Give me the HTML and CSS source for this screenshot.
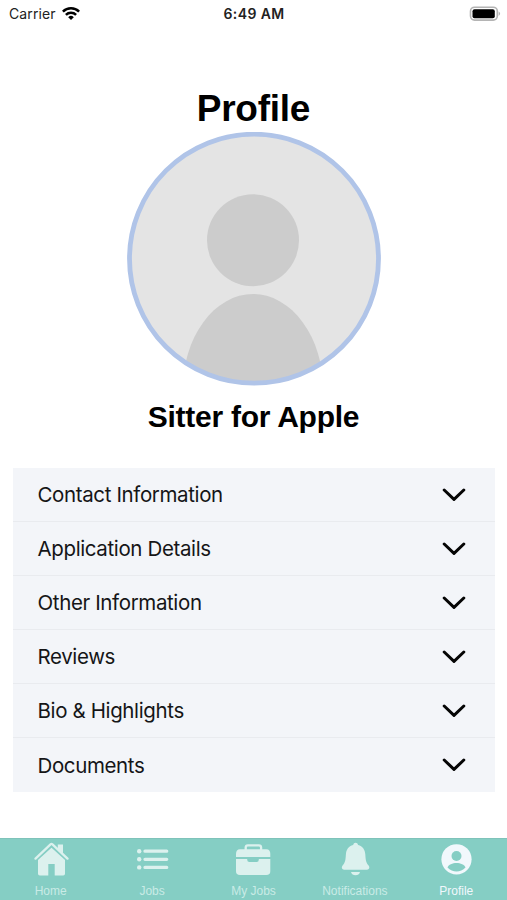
FILE: index.html
```html
<!DOCTYPE html>
<html lang="en">
<head>
<meta charset="utf-8">
<title>Profile</title>
<link rel="stylesheet" href="styles.css">
</head>
<body>
<div class="screen">
  <header class="status">
    <div class="carrier">Carrier
      <svg width="18" height="14" viewBox="0 0 18 14"><g fill="none" stroke="#000" stroke-width="2.5"><path d="M.9 4.700a11.500 11.500 0 0 1 16.200 0"/><path d="M3.900 7.800a7.200 7.200 0 0 1 10.200 0"/></g><path d="M6.200 10.200a4 4 0 0 1 5.600 0L9 13z"/></svg>
    </div>
    <div class="time">6:49 AM</div>
    <svg class="battery" width="32" height="16" viewBox="0 0 32 16"><rect x="1.500" y="1.200" width="26.800" height="12.900" rx="4" fill="#fff" stroke="#b4b4b4" stroke-width="1.600"/><rect x="3.500" y="3.300" width="22.300" height="8.900" rx="2"/><path d="M29.600 5.500q3 2.200 0 4.400z" fill="#b4b4b4"/></svg>
  </header>
  <main>
    <h1>Profile</h1>
    <svg class="avatar" width="254" height="254" viewBox="0 0 254 254">
      <clipPath id="disc"><circle cx="127" cy="127" r="124"/></clipPath>
      <circle cx="127" cy="127" r="124" fill="#e4e4e4"/>
      <g clip-path="url(#disc)" fill="#cccccc"><circle cx="126" cy="108.200" r="46"/><ellipse cx="126" cy="259" rx="70.500" ry="97"/></g>
      <circle cx="127" cy="126.700" r="124.500" fill="none" stroke="#b0c4e8" stroke-width="4.800"/>
    </svg>
    <h2>Sitter for Apple</h2>
    <ul class="sections">
      <li>Contact Information<svg class="chev" viewBox="0 0 24 14"><path d="M2.200 2 12 11.400l9.800-9.400"/></svg></li>
      <li>Application Details<svg class="chev" viewBox="0 0 24 14"><path d="M2.200 2 12 11.400l9.800-9.400"/></svg></li>
      <li>Other Information<svg class="chev" viewBox="0 0 24 14"><path d="M2.200 2 12 11.400l9.800-9.400"/></svg></li>
      <li>Reviews<svg class="chev" viewBox="0 0 24 14"><path d="M2.200 2 12 11.400l9.800-9.400"/></svg></li>
      <li>Bio &amp; Highlights<svg class="chev" viewBox="0 0 24 14"><path d="M2.200 2 12 11.400l9.800-9.400"/></svg></li>
      <li>Documents<svg class="chev" viewBox="0 0 24 14"><path d="M2.200 2 12 11.400l9.800-9.400"/></svg></li>
    </ul>
  </main>
  <nav class="tabs">
    <a><svg viewBox="0 0 36 36"><path d="M18.500 5 32 17v14.700q0 1.800-1.800 1.800h-8.500V22h-6.400v11.500H6.800q-1.800 0-1.800-1.800V17z"/><path d="M2.500 17 18.500 2.500l16 14.500" fill="none" stroke="#85cec4" stroke-width="4.800"/><path d="M24.800 2.500h5.200v9l-5.200-4.700z"/><path d="M2.500 16.600 17.500 2.300q1-.8 2 0L34.500 16.600" fill="none" stroke="#dcf1ee" stroke-width="2.300" stroke-linecap="round"/></svg>Home</a>
    <a><svg viewBox="0 0 36 36"><circle cx="5.200" cy="9.200" r="2.200"/><circle cx="5.200" cy="17.300" r="2.200"/><circle cx="5.200" cy="25.400" r="2.200"/><path d="M11 9.200h21.700M11 17.300h21.700M11 25.400h21.700" stroke="#dcf1ee" stroke-width="3.300" stroke-linecap="round"/></svg>Jobs</a>
    <a><svg viewBox="0 0 36 36"><path d="M10.700 8.500V5.500q0-2.200 2.200-2.200h11Q26.100 3.300 26.100 5.500v3" fill="none" stroke="#dcf1ee" stroke-width="2.300"/><path d="M1 15v-3Q1 7.300 5 7.300h26.300q4 0 4 4.700v3z"/><path d="M1 17h11.200v.8q0 2.200 2.200 2.200h7.200q2.200 0 2.200-2.200V17h11.500v12.200q0 3.800-4 3.800H5q-4 0-4-3.800z"/></svg>My Jobs</a>
    <a><svg viewBox="0 0 36 36"><path d="M18.600.8q2 0 2.500 2.200c4.500 1 6.900 4.800 7.200 9.300.4 6.500.8 8.300 3.300 11.300 1.500 1.900.6 4.100-1.500 4.100H7.100c-2.100 0-3-2.200-1.500-4.100 2.500-3 2.900-4.800 3.300-11.300.3-4.500 2.700-8.300 7.200-9.300q.5-2.200 2.500-2.200z"/><path d="M14 30h9q-1 3.300-4.500 3.300T14 30z"/></svg>Notifications</a>
    <a class="active"><svg viewBox="0 0 36 36"><circle cx="18.500" cy="17.300" r="15.100"/><circle cx="18.500" cy="14" r="5" fill="#85cec4"/><path d="M9.500 25.600c2-6 16-6 18 0-5 5.200-13 5.200-18 0z" fill="#85cec4"/></svg>Profile</a>
  </nav>
</div>
</body>
</html>
```
FILE: styles.css
```css
* { box-sizing: border-box; }
body { margin: 0; background: #fff; color: #000; font-family: Inter, sans-serif; }
.screen { width: 507px; height: 900px; display: flex; flex-direction: column; overflow: hidden; }
.status { height: 27px; padding: 0 6px 0 9px; display: grid; grid-template-columns: 1fr auto 1fr; align-items: center; font-size: 14px; }
.carrier { display: flex; align-items: center; gap: 6px; color: #222; letter-spacing: .1px; }
.time { font-weight: 600; letter-spacing: .4px; margin-right: 2px; color: #222; }
.battery { justify-self: end; }
main { flex: 1; display: flex; flex-direction: column; align-items: center; }
h1, h2 { margin: 0; font-family: "Liberation Sans", Arial, sans-serif; font-weight: 700; }
h1 { margin-top: 59px; height: 46px; line-height: 46px; font-size: 37px; letter-spacing: -.25px; }
.avatar { display: block; flex: none; }
h2 { margin-top: 13px; height: 36px; line-height: 36px; font-size: 30px; letter-spacing: -.25px; }
.sections { list-style: none; width: 482px; margin: 33px 0 0; padding: 0; background: #f3f5f9; }
.sections li { height: 54px; display: flex; align-items: center; justify-content: space-between; padding: 0 29px 0 25px; font-size: 20.5px; letter-spacing: -.37px; color: #151517; border-bottom: 1px solid #e9ebef; }
.sections li:last-child { border-bottom: 0; }
.chev { width: 24px; height: 14px; fill: none; stroke: #050505; stroke-width: 3; stroke-linecap: round; stroke-linejoin: round; }
.tabs { height: 62px; flex: none; display: grid; grid-template-columns: repeat(5, 1fr); background: #85cec4; border-top: 1px solid #7fc3ba; }
.tabs a { display: flex; flex-direction: column; align-items: center; padding-top: 3px; font: 12px/16px "Liberation Sans", Arial, sans-serif; color: #c9ebe6; }
.tabs svg { width: 36px; height: 36px; margin-bottom: 5px; fill: #dcf1ee; }
.tabs .active { color: #f1f8fc; }
.tabs .active svg { fill: #f1f8fc; }
```
